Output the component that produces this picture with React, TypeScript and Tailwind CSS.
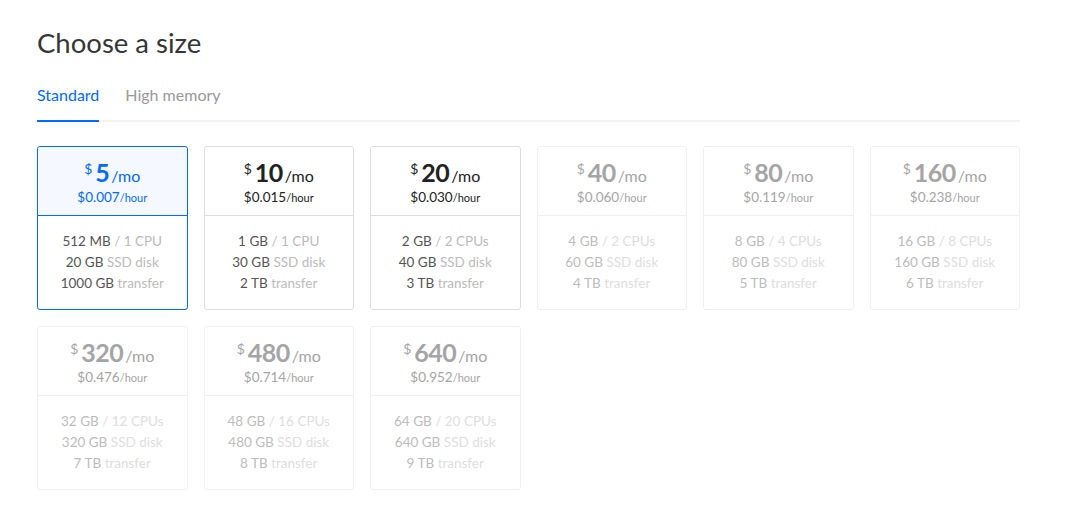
import React, { useState } from 'react'

type Size = {
    mo: string
    hour: string
    mem: string
    cpu: string
    disk: string
    transfer: string
    enabled: boolean
}

const sizes: Size[] = [
    { mo: '5', hour: '$0.007', mem: '512 MB', cpu: '1 CPU', disk: '20 GB', transfer: '1000 GB', enabled: true },
    { mo: '10', hour: '$0.015', mem: '1 GB', cpu: '1 CPU', disk: '30 GB', transfer: '2 TB', enabled: true },
    { mo: '20', hour: '$0.030', mem: '2 GB', cpu: '2 CPUs', disk: '40 GB', transfer: '3 TB', enabled: true },
    { mo: '40', hour: '$0.060', mem: '4 GB', cpu: '2 CPUs', disk: '60 GB', transfer: '4 TB', enabled: false },
    { mo: '80', hour: '$0.119', mem: '8 GB', cpu: '4 CPUs', disk: '80 GB', transfer: '5 TB', enabled: false },
    { mo: '160', hour: '$0.238', mem: '16 GB', cpu: '8 CPUs', disk: '160 GB', transfer: '6 TB', enabled: false },
    { mo: '320', hour: '$0.476', mem: '32 GB', cpu: '12 CPUs', disk: '320 GB', transfer: '7 TB', enabled: false },
    { mo: '480', hour: '$0.714', mem: '48 GB', cpu: '16 CPUs', disk: '480 GB', transfer: '8 TB', enabled: false },
    { mo: '640', hour: '$0.952', mem: '64 GB', cpu: '20 CPUs', disk: '640 GB', transfer: '9 TB', enabled: false },
]

function SizeCard({ size, selected, onClick }: { size: Size, selected: boolean, onClick: () => void }) {

    // card / divider colours per state (text colour set too so currentColor borders match)
    const cardCls = selected
        ? 'border-[#0069ff] text-[#0069ff]'
        : size.enabled ? 'border-[#dddddd] text-[#dddddd]' : 'border-[#efefef] text-[#efefef]'
    const headCls = selected
        ? 'border-[#0069ff] bg-[#f5f9ff] text-[#0069ff]'
        : size.enabled ? 'border-[#dddddd] bg-white text-[#222222]' : 'border-[#efefef] bg-white text-[#a5a5a5]'
    const strong = size.enabled ? 'text-[#555555]' : 'text-[#bcbcbc]'
    const light = size.enabled ? 'text-[#bbbbbb]' : 'text-[#dedede]'

    return (
        <div
            onClick={onClick}
            className={`flex flex-col h-[164px] border border-solid rounded-[3px] text-center cursor-pointer ${cardCls}`}
        >
            <div className={`h-[69px] flex flex-col items-center pt-[14px] border-b border-solid rounded-t-[3px] ${headCls}`}>
                <div className="flex items-baseline leading-[22px]">
                    <span className="text-[14px] relative -top-[8px] mr-[3px]">$</span>
                    <span className="text-[25px] font-bold tracking-[-0.5px]">{size.mo}</span>
                    <span className="text-[16px] ml-[2px]">/mo</span>
                </div>
                <div className="leading-[15px]">
                    <span className="text-[13.5px]">{size.hour}</span>
                    <span className="text-[11px]">/hour</span>
                </div>
            </div>
            <div className="flex-1 flex flex-col justify-center text-[13.5px] leading-[21px]">
                <div><span className={strong}>{size.mem}</span> <span className={light}>/ {size.cpu}</span></div>
                <div><span className={strong}>{size.disk}</span> <span className={light}>SSD disk</span></div>
                <div><span className={strong}>{size.transfer}</span> <span className={light}>transfer</span></div>
            </div>
        </div>
    )
}

export default function App() {

    const [tab, setTab] = useState<'standard' | 'high'>('standard')
    const [selected, setSelected] = useState<number>(0)

    return (
        <div className="min-h-screen bg-white px-[37px] pt-[26px]" style={{ fontFamily: 'Lato, "Liberation Sans", sans-serif' }}>
            <div className="w-[983px]">
                <h1 className="text-[27.5px] leading-[34px] text-[#363636]">Choose a size</h1>

                <div className="flex mt-[25px] border-b-2 border-solid border-[#f3f3f3]">
                    <button
                        type="button"
                        onClick={() => setTab('standard')}
                        className={`text-[16px] leading-[20px] pb-[15px] -mb-[2px] border-b-2 border-solid ${tab === 'standard' ? 'text-[#0069ff] border-[#0069ff]' : 'text-[#999999] border-transparent'}`}
                    >
                        Standard
                    </button>
                    <button
                        type="button"
                        onClick={() => setTab('high')}
                        className={`text-[16px] leading-[20px] pb-[15px] -mb-[2px] ml-[26px] border-b-2 border-solid ${tab === 'high' ? 'text-[#0069ff] border-[#0069ff]' : 'text-[#999999] border-transparent'}`}
                    >
                        High memory
                    </button>
                </div>

                <div className="grid grid-cols-6 gap-4 mt-[24px]">
                    {sizes.map((s, i) => (
                        <SizeCard key={i} size={s} selected={selected === i} onClick={() => s.enabled && setSelected(i)} />
                    ))}
                </div>
            </div>
        </div>
    )
}
